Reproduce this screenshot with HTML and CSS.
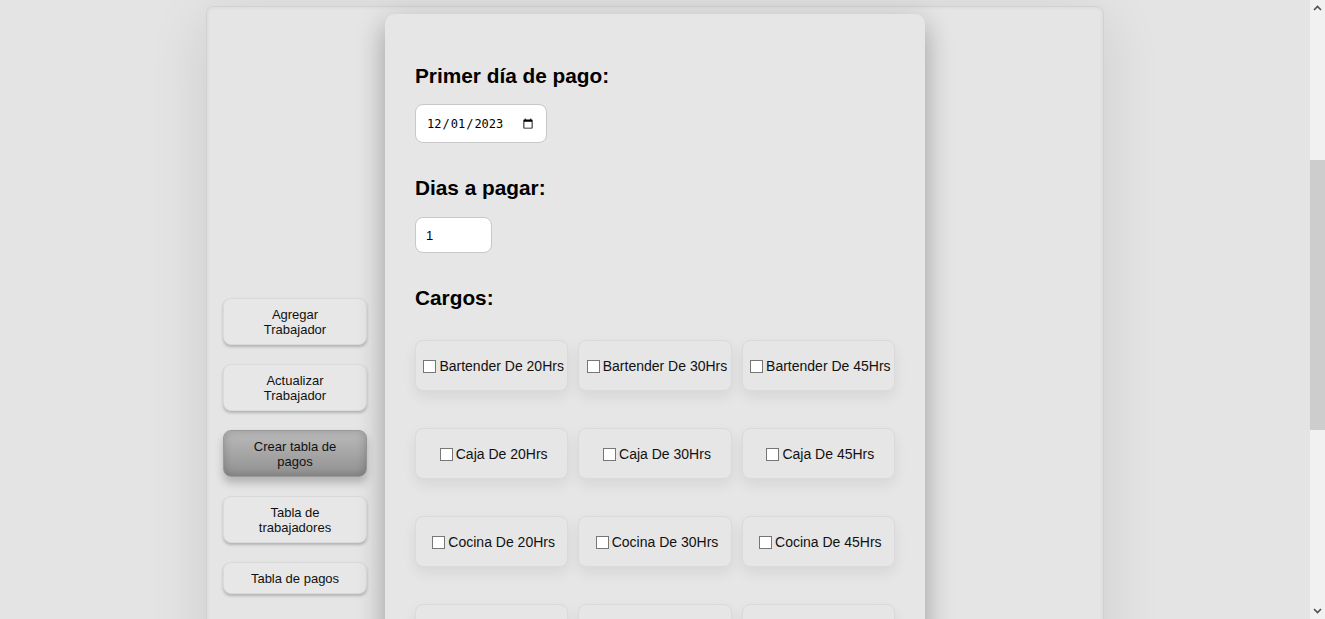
FILE: index.html
```html
<!DOCTYPE html>
<html lang="es">
<head>
<meta charset="utf-8">
<title>Crear tabla de pagos</title>
<link rel="stylesheet" href="styles.css">
</head>
<body>
<main class="shell">
  <nav class="sidebar">
    <button class="nav-btn">Agregar Trabajador</button>
    <button class="nav-btn">Actualizar Trabajador</button>
    <button class="nav-btn active">Crear tabla de pagos</button>
    <button class="nav-btn">Tabla de trabajadores</button>
    <button class="nav-btn">Tabla de pagos</button>
  </nav>
  <form class="card">
    <h2 class="label">Primer día de pago:</h2>
    <input class="field date" type="date" value="2023-12-01">
    <h2 class="label">Dias a pagar:</h2>
    <input class="field number" type="text" value="1">
    <h2 class="label">Cargos:</h2>
    <div class="roles">
      <label class="role"><input type="checkbox">Bartender De 20Hrs</label>
      <label class="role"><input type="checkbox">Bartender De 30Hrs</label>
      <label class="role"><input type="checkbox">Bartender De 45Hrs</label>
      <label class="role"><input type="checkbox">Caja De 20Hrs</label>
      <label class="role"><input type="checkbox">Caja De 30Hrs</label>
      <label class="role"><input type="checkbox">Caja De 45Hrs</label>
      <label class="role"><input type="checkbox">Cocina De 20Hrs</label>
      <label class="role"><input type="checkbox">Cocina De 30Hrs</label>
      <label class="role"><input type="checkbox">Cocina De 45Hrs</label>
      <label class="role"><input type="checkbox">Mesero De 20Hrs</label>
      <label class="role"><input type="checkbox">Mesero De 30Hrs</label>
      <label class="role"><input type="checkbox">Mesero De 45Hrs</label>
    </div>
    <button class="submit" type="button">Crear tabla</button>
  </form>
</main>
<div class="scrollbar" aria-hidden="true">
  <svg class="arrow" width="15" height="15" viewBox="0 0 15 15"><path d="M4 9 L7.5 5.5 L11 9" fill="none" stroke="#505050" stroke-width="1.6"/></svg>
  <div class="thumb"></div>
  <svg class="arrow bottom" width="15" height="15" viewBox="0 0 15 15"><path d="M4 6 L7.5 9.5 L11 6" fill="none" stroke="#505050" stroke-width="1.6"/></svg>
</div>
<script src="script.js"></script>
</body>
</html>
```
FILE: styles.css
```css
html, body {
  margin: 0;
  padding: 0;
}
body {
  box-sizing: border-box;
  padding-right: 15px;
  background: #e4e4e4;
  font-family: "Liberation Sans", Arial, sans-serif;
  color: #111;
}
.shell {
  box-sizing: border-box;
  width: 898px;
  min-height: 1001px;
  margin: 334px auto 6px;
  display: flex;
  align-items: flex-start;
  background: #e5e5e5;
  border: 1px solid #d0d3d6;
  border-radius: 7px;
  box-shadow: 0 12px 60px rgba(0, 0, 0, 0.11), inset 0 0 4px rgba(0, 0, 0, 0.07);
}
.sidebar {
  box-sizing: border-box;
  flex: 0 0 178px;
  display: flex;
  flex-direction: column;
  align-items: center;
  gap: 19px;
  padding: 291px 2px 0 0;
}
.nav-btn {
  box-sizing: border-box;
  width: 144px;
  padding: 7.5px 20px;
  border: 1px solid #dadada;
  border-radius: 8px;
  background: #e7e7e7;
  box-shadow: 0 2px 3px rgba(0, 0, 0, 0.22);
  font-family: "Liberation Sans", Arial, sans-serif;
  font-size: 13px;
  line-height: 15px;
  color: #111;
  text-align: center;
}
.nav-btn.active {
  border-color: #9a9a9a;
  background: linear-gradient(to bottom, #bbbbbb, #909090);
  box-shadow: inset 0 0 8px rgba(0, 0, 0, 0.2), 0 6px 8px rgba(0, 0, 0, 0.22);
}
.card {
  box-sizing: border-box;
  flex: 0 0 540px;
  margin-top: 7px;
  padding: 50px 30px 40px;
  min-height: 985px;
  background: #e6e6e6;
  border-radius: 10px;
  box-shadow: 0 10px 28px rgba(0, 0, 0, 0.32);
  display: flex;
  flex-direction: column;
  align-items: flex-start;
}
.label {
  margin: 0 0 16px;
  font-size: 20.8px;
  line-height: 24px;
  font-weight: bold;
  color: #000;
}
.field {
  box-sizing: border-box;
  margin: 0 0 33px;
  background: #fff;
  border: 1px solid #c8c8c8;
  border-radius: 8px;
  color: #000;
}
.date {
  width: 132px;
  height: 39px;
  padding: 0 10px;
  font-family: "DejaVu Sans Mono", monospace;
  font-size: 12px;
}
.number {
  width: 77px;
  height: 36px;
  padding: 0 10px;
  font-family: "Liberation Sans", Arial, sans-serif;
  font-size: 13px;
  margin-top: 1px;
}
.roles {
  align-self: stretch;
  margin-top: 14px;
  display: grid;
  grid-template-columns: repeat(3, 1fr);
  column-gap: 10px;
  row-gap: 37px;
}
.role {
  box-sizing: border-box;
  height: 51px;
  display: flex;
  align-items: center;
  justify-content: center;
  background: #e6e6e6;
  border: 1px solid #dadada;
  border-radius: 8px;
  box-shadow: 0 6px 14px rgba(0, 0, 0, 0.07);
  font-size: 14px;
  color: #111;
  white-space: nowrap;
}
.role input {
  appearance: none;
  -webkit-appearance: none;
  box-sizing: border-box;
  margin: 1px 3px 0 4px;
  width: 13px;
  height: 13px;
  background: #fff;
  border: 1px solid #767676;
  border-radius: 0;
}
.submit {
  margin-top: 40px;
  padding: 10px 24px;
  border: 1px solid #dadada;
  border-radius: 8px;
  background: #e7e7e7;
  box-shadow: 0 2px 3px rgba(0, 0, 0, 0.22);
  font-family: "Liberation Sans", Arial, sans-serif;
  font-size: 14px;
}
.scrollbar {
  position: fixed;
  top: 0;
  right: 0;
  bottom: 0;
  width: 15px;
  background: #f1f1f1;
  display: flex;
  flex-direction: column;
}
.arrow {
  flex: 0 0 17px;
  height: 17px;
}
.arrow.bottom {
  margin-top: auto;
}
.thumb {
  margin-top: 143px;
  height: 270px;
  background: #cdcdcd;
}
```
FILE: script.js
```js
window.scrollTo(0, 328);
window.addEventListener('load', function () {
  window.scrollTo(0, 328);
});
```
